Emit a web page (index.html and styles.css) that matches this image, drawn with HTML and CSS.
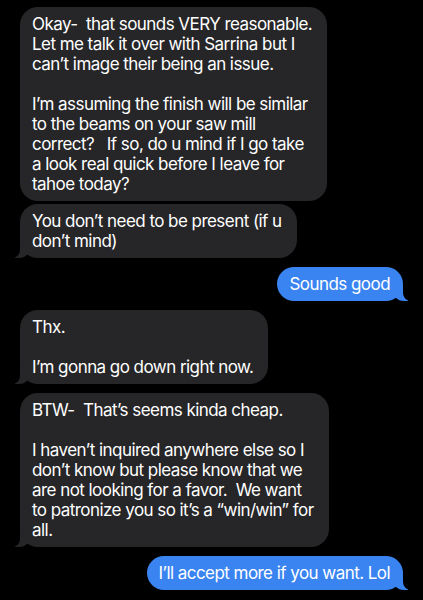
FILE: index.html
```html
<!DOCTYPE html>
<html lang="en">
<head>
    <meta charset="UTF-8">
    <meta name="viewport" content="width=device-width, initial-scale=1.0">
    <title>Messages</title>
    <link rel="stylesheet" href="styles.css">
</head>
<body>
    <div class="thread">
        <div class="bubble in">Okay-&nbsp; that sounds VERY reasonable.<br>Let me talk it over with Sarrina but I<br>can’t image their being an issue.<br><br>I’m assuming the finish will be similar<br>to the beams on your saw mill<br>correct?&nbsp;&nbsp; If so, do u mind if I go take<br>a look real quick before I leave for<br>tahoe today?</div>
        <div class="bubble in tail same">You don’t need to be present (if u<br>don’t mind)</div>

        <div class="bubble out tail">Sounds good</div>

        <div class="bubble in tail">Thx.<br><br>I’m gonna go down right now.</div>

        <div class="bubble in tail">BTW-&nbsp; That’s seems kinda cheap.<br><br>I haven’t inquired anywhere else so I<br>don’t know but please know that we<br>are not looking for a favor.&nbsp; We want<br>to patronize you so it’s a “win/win” for<br>all.</div>

        <div class="bubble out tail">I’ll accept more if you want. Lol</div>
    </div>
</body>
</html>
```

FILE: styles.css
```css
body {
    margin: 0;
    background-color: #000;
    font-family: Inter, "Noto Sans", sans-serif;
    color: #fff;
}

.thread {
    display: flex;
    flex-direction: column;
    padding: 7px 20px 0 20px;
}

.bubble {
    position: relative;
    white-space: nowrap;
    font-size: 17px;
    letter-spacing: -0.55px;
    line-height: 20px;
    padding: 7px 15px 7px 12px;
    border-radius: 18px;
    margin-top: 9px;
}

.bubble:first-child {
    margin-top: 0;
}

.bubble.same {
    margin-top: 3px;
}

.in {
    align-self: flex-start;
    background-color: #262628;
}

.out {
    align-self: flex-end;
    background-color: #3a84f1;
    padding-right: 13px;
}

/* little tails on the last bubble of a group */
.tail::before,
.tail::after {
    content: "";
    position: absolute;
    bottom: 0;
    height: 16px;
}

.in.tail::before {
    left: -5px;
    width: 16px;
    background-color: #262628;
    border-bottom-right-radius: 12px;
}

.in.tail::after {
    left: -8px;
    width: 8px;
    background-color: #000;
    border-bottom-right-radius: 8px;
}

.out.tail::before {
    right: -5px;
    width: 16px;
    background-color: #3a84f1;
    border-bottom-left-radius: 12px;
}

.out.tail::after {
    right: -8px;
    width: 8px;
    background-color: #000;
    border-bottom-left-radius: 8px;
}
```
